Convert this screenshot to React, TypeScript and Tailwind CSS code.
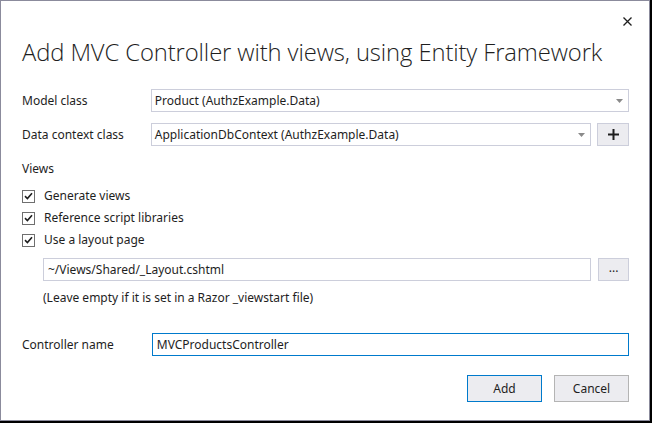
import React from "react";

const font = { fontFamily: '"Noto Sans", "Segoe UI", sans-serif' };

function Check({ label }: { label: string }) {
  return (
    <div className="flex items-center h-[22px]">
      <div className="w-[13px] h-[13px] border border-[#6f6f6f] bg-white flex items-center justify-center">
        <svg width="9" height="8" viewBox="0 0 9 8">
          <path d="M1 4.2 L3.4 6.5 L8 1.2" fill="none" stroke="#1e1e1e" strokeWidth="1.6" />
        </svg>
      </div>
      <span className="ml-[9px] text-[12px] text-[#1e1e1e]">{label}</span>
    </div>
  );
}

function Combo({ value, className }: { value: string; className: string }) {
  return (
    <div className={`h-[23px] border border-[#cccedb] bg-white flex items-center pl-[3px] pr-[5px] ${className}`}>
      <span className="flex-1 text-[12px] text-[#1e1e1e]">{value}</span>
      <svg width="7" height="4" viewBox="0 0 7 4">
        <path d="M0 0 H7 L3.5 4 Z" fill="#8a8a8a" />
      </svg>
    </div>
  );
}

export default function App() {
  return (
    <div className="w-[652px] h-[423px] bg-black" style={font}>
      <div className="w-[650px] h-[421px] border border-[#8b8b9c] bg-white relative">
        <button className="absolute right-[16px] top-[14px] w-[12px] h-[12px] flex items-center justify-center">
          <svg width="9" height="9" viewBox="0 0 9 9">
            <path d="M0.5 0.5 L8.5 8.5 M8.5 0.5 L0.5 8.5" stroke="#1e1e1e" strokeWidth="1.3" />
          </svg>
        </button>

        <div className="pl-[21px] pr-[20px]">
          <h1 className="pt-[35px] h-[88px] font-['Open_Sans',sans-serif] text-[23.8px] font-light text-[#1e1e1e] leading-[32px] tracking-[-0.1px]">
            Add MVC Controller with views, using Entity Framework
          </h1>

          <div className="flex items-center">
            <span className="w-[129px] text-[12px] text-[#1e1e1e]">Model class</span>
            <Combo value="Product (AuthzExample.Data)" className="w-[479px]" />
          </div>

          <div className="flex items-center mt-[11px]">
            <span className="w-[129px] text-[12px] text-[#1e1e1e]">Data context class</span>
            <Combo value="ApplicationDbContext (AuthzExample.Data)" className="w-[441px]" />
            <button className="ml-[6px] w-[32px] h-[23px] border border-[#cccedb] bg-[#ececf0] flex items-center justify-center">
              <svg width="11" height="11" viewBox="0 0 11 11">
                <path d="M5.5 0 V11 M0 5.5 H11" stroke="#1e1e1e" strokeWidth="2" />
              </svg>
            </button>
          </div>

          <div className="mt-[14px] text-[12px] text-[#1e1e1e] h-[18px] leading-[18px]">Views</div>

          <div className="mt-[7px]">
            <Check label="Generate views" />
            <Check label="Reference script libraries" />
            <Check label="Use a layout page" />
          </div>

          <div className="ml-[21px] mt-[7px] flex items-center">
            <div className="w-[550px] h-[23px] border border-[#cccedb] bg-white flex items-center pl-[4px] text-[12px] text-[#1e1e1e]">
              ~/Views/Shared/_Layout.cshtml
            </div>
            <button className="ml-[7px] w-[31px] h-[23px] border border-[#cccedb] bg-[#ececf0] text-[12px] text-[#1e1e1e] leading-none pb-[4px]">
              ...
            </button>
          </div>
          <div className="ml-[21px] mt-[8px] text-[12px] text-[#1e1e1e]">
            (Leave empty if it is set in a Razor _viewstart file)
          </div>

          <div className="flex items-center mt-[26px]">
            <span className="w-[130px] text-[12px] text-[#1e1e1e]">Controller name</span>
            <div className="w-[478px] h-[23px] border border-[#007acc] bg-white flex items-center pl-[4px] text-[12px] text-[#1e1e1e]">
              MVCProductsController
            </div>
          </div>

          <div className="flex justify-end mt-[19px] gap-[12px]">
            <button className="w-[75px] h-[27px] border border-[#007acc] bg-[#ececf0] text-[12px] text-[#1e1e1e]">
              Add
            </button>
            <button className="w-[75px] h-[27px] border border-[#b4b4b4] bg-[#ececf0] text-[12px] text-[#1e1e1e]">
              Cancel
            </button>
          </div>
        </div>
      </div>
    </div>
  );
}
